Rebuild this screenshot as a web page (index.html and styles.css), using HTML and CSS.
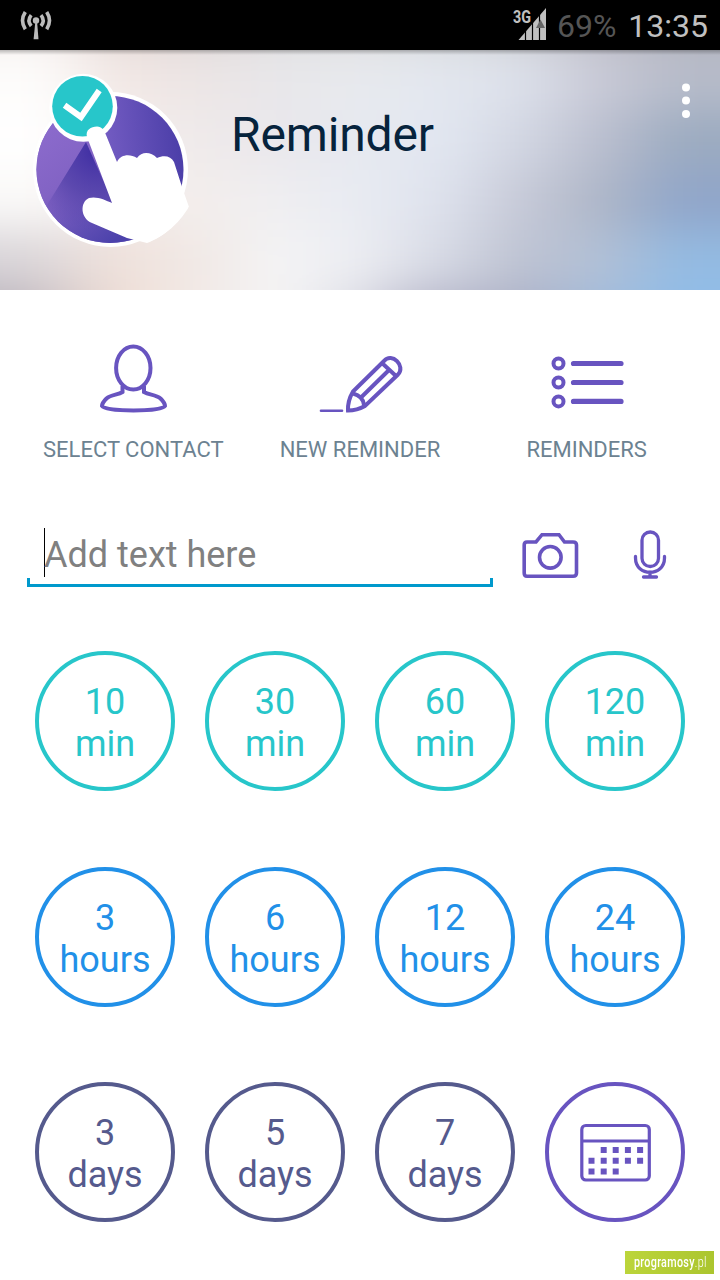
FILE: index.html
```html
<!DOCTYPE html>
<html lang="en">
<head>
<meta charset="utf-8">
<title>Reminder</title>
<link rel="stylesheet" href="styles.css">
</head>
<body>
<div class="status">
  <svg class="antenna" width="32" height="30" viewBox="0 0 32 30">
    <circle cx="16" cy="10.5" r="3.2"/>
    <path d="M15.3 12h1.8l1.4 17.3h-4.9z"/>
    <g class="waves"><path d="M11.2 5.2Q6.8 10.6 11.2 16" /><path d="M5.3 2Q-.3 10.6 5.3 19.2"/><path d="M21 5.2Q25.400 10.600 21 16"/><path d="M26.700 2Q32.300 10.600 26.700 19.200"/></g>
  </svg>
  <div class="status-right">
    <svg class="signal" width="34" height="34" viewBox="0 0 34 34">
      <text x="0" y="16" textLength="18" lengthAdjust="spacingAndGlyphs">3G</text>
      <path d="M5.500 33L33 1V33z"/>
      <path class="splits" d="M12.500 18v15M19.500 10v23M26.500 3v30"/>
      <path class="arrow" d="M27.500 12.500L32 21h-9z"/>
    </svg>
    <span class="battery">69%</span>
    <span class="clock">13:35</span>
  </div>
</div>
<header class="header">
  <svg class="logo" width="162" height="180" viewBox="30 70 162 180">
    <defs>
      <linearGradient id="right" x1="0" y1=".5" x2="1" y2=".4"><stop offset=".4" stop-color="#7960c6"/><stop offset="1" stop-color="#4b3ea8"/></linearGradient>
      <linearGradient id="left" x1="0" y1="0" x2=".6" y2="1"><stop offset="0" stop-color="#9270d2"/><stop offset=".55" stop-color="#8263c4"/><stop offset="1" stop-color="#4c42ab"/></linearGradient>
      <radialGradient id="fold" gradientUnits="userSpaceOnUse" cx="98" cy="150" r="80"><stop offset="0" stop-color="#3d2ca2"/><stop offset=".55" stop-color="#5644ab" stop-opacity=".85"/><stop offset="1" stop-color="#5946ad" stop-opacity="0"/></radialGradient>
      <clipPath id="disc"><path d="M30 70H192V201A90 90 0 0 1 142 246H30Z"/></clipPath>
      <clipPath id="inner"><circle cx="110" cy="169.500" r="73.500"/></clipPath>
    </defs>
    <circle cx="110.500" cy="169.500" r="77.500" fill="#fff"/>
    <circle cx="110" cy="169.500" r="73.500" fill="url(#right)"/>
    <g clip-path="url(#inner)"><path d="M86 120L30 90V250H150Z" fill="url(#left)"/><path d="M86 142L44 210L80 250L140 250L114 205Z" fill="url(#fold)"/></g>
    <circle cx="83.300" cy="107.800" r="34" fill="#fff"/>
    <circle cx="82.500" cy="106.300" r="30.300" fill="#27c6ca"/>
    <path d="M67 107L81 117L97.500 93" fill="none" stroke="#fff" stroke-width="6" stroke-linecap="square"/>
    <g clip-path="url(#disc)"><path d="M87 137C85 130 91 126.500 97 126.500C102 127 104 130 106 135L117 162C121 154 130 154 137 158C142 151 151 152 157 158C164 155 171 156 174 162L183 190L189 207C185 221 162 238 147 243L127 238L92 223C80 218 80 202 89 198C97 196 105 200 112 203Z" fill="#fff"/></g>
  </svg>
  <h1 class="title">Reminder</h1>
  <svg class="more" width="10" height="36" viewBox="0 0 10 36"><circle cx="5" cy="4.500" r="4"/><circle cx="5" cy="17.600" r="4"/><circle cx="5" cy="30.900" r="4"/></svg>
</header>
<nav class="actions">
  <div class="action">
    <svg width="100" height="80" viewBox="83 340 100 80"><ellipse cx="133.300" cy="368" rx="17.200" ry="21.500"/><path d="M122.500 386v6C118 395 111 394.500 106.500 398.500C103.500 401.500 102 404 102 406C106 412 161 412 165 406C165 404 163.500 401.500 160.500 398.500C156 394.500 149 395 144 392v-6"/></svg>
    <span>SELECT CONTACT</span>
  </div>
  <div class="action">
    <svg width="100" height="80" viewBox="310 340 100 80"><path d="M321 410.800H342" stroke-width="2.600" stroke-linecap="round"/><path d="M348 410.500Q347.500 401 353 391.500L384 361C392 352 406 366 398 374.500L365 406Q357 410.500 348 410.500ZM353 393.500Q363 396 364 405M382.500 363.500L396 376M361 397.500L388 371"/></svg>
    <span>NEW REMINDER</span>
  </div>
  <div class="action">
    <svg width="100" height="80" viewBox="537 340 100 80"><circle cx="558.500" cy="363.500" r="5"/><circle cx="558.500" cy="382.500" r="5"/><circle cx="558.500" cy="401.400" r="5"/><path d="M573.500 363.500H621M573.500 382.500H621M573.500 401.400H621" stroke-width="5.200" stroke-linecap="round"/></svg>
    <span>REMINDERS</span>
  </div>
</nav>
<div class="entry">
  <div class="field"><span class="placeholder">Add text here</span></div>
  <svg class="camera" width="58" height="50" viewBox="521 530 58 50"><path d="M527 542H536L542 534.700H559L564.500 542H573Q576.500 542 576.500 545V573Q576.500 576.300 573 576.300H527Q524.200 576.300 524.200 573V545Q524.200 542 527 542Z"/><circle cx="550.300" cy="557.300" r="10.800"/></svg>
  <svg class="mic" width="36" height="52" viewBox="632 529 36 52"><rect x="642" y="532" width="16.500" height="34.500" rx="8.250"/><path d="M635.500 556.500V558C635.500 577 664.500 577 664.500 558V556.500M650 572V577M643.500 577H656.500" stroke-linecap="round"/></svg>
</div>
<main class="times">
  <div class="time min">10<br>min</div><div class="time min">30<br>min</div><div class="time min">60<br>min</div><div class="time min">120<br>min</div>
  <div class="time hours">3<br>hours</div><div class="time hours">6<br>hours</div><div class="time hours">12<br>hours</div><div class="time hours">24<br>hours</div>
  <div class="time days">3<br>days</div><div class="time days">5<br>days</div><div class="time days">7<br>days</div>
  <div class="time custom">
    <svg width="72" height="60" viewBox="0 0 72 60"><rect x="1.800" y="2.500" width="67.500" height="54.500" rx="4"/><path d="M2 18H69"/><path class="dates" d="M20.700 27h6m6 0h6m6.200 0h6m6.200 0h6M8.500 37.700h6m6.200 0h6m6 0h6m6.200 0h6m6.200 0h6M8.500 48.400h6m6.200 0h6m6 0h6"/></svg>
  </div>
</main>
<div class="watermark"><div class="mark"><b>programosy</b><span>.pl</span></div></div>
</body>
</html>
```
FILE: styles.css
```css
* { box-sizing: border-box; }
body {
  margin: 0;
  width: 720px;
  height: 1280px;
  position: relative;
  overflow: hidden;
  background: #fff;
  font-family: Roboto, sans-serif;
}
svg { display: block; flex: none; }
.status {
  height: 50px;
  padding: 0 12px 0 20px;
  display: flex;
  justify-content: space-between;
  background: #000;
  color: #c0c0c0;
  font-size: 32px;
  line-height: 52px;
}
.antenna { margin-top: 10px; fill: #bbb; }
.waves { fill: none; stroke: #bbb; stroke-width: 3.6; }
.status-right { display: flex; }
.signal { margin: 7px 10px 0 1px; fill: #c0c0c0; }
.signal text { font-size: 18px; font-weight: 700; }
.splits { stroke: #000; stroke-width: 1.2; }
.arrow { fill: #666; }
.battery { color: #555; margin-right: 12px; }
.header {
  position: relative;
  z-index: 0;
  overflow: hidden;
  height: 240px;
  padding: 20px 30px;
  display: flex;
  align-items: flex-start;
}
/* Out-of-focus backdrop: six colour bands melted together */
.header::before {
  content: "";
  position: absolute;
  z-index: -1;
  left: -80px;
  top: -60px;
  width: 880px;
  height: 360px;
  filter: blur(22px);
  background:
    linear-gradient(90deg, #f5f0ee 120px, #e5d8d5 200px, #dfd8d8 280px, #dfdfe1 360px, #dfdfe0 440px, #d8dadc 520px, #cfd0d4 600px, #bfbfc7 680px, #b5b5be 760px) 0 0 / 100% 60px no-repeat,
    linear-gradient(90deg, #fdfcfb 120px, #f2e8e5 200px, #ece5e5 280px, #e8e7ea 360px, #e8eaee 440px, #e3e7ef 520px, #dde1eb 600px, #c9cad7 680px, #b7bcca 760px) 0 60px / 100% 60px no-repeat,
    linear-gradient(90deg, #ffffff 120px, #f5efed 200px, #efeaea 280px, #e9e7ec 360px, #e6e9f0 440px, #e2e7f1 520px, #d3d7e3 600px, #bbbfcf 680px, #9cabc0 760px) 0 120px / 100% 60px no-repeat,
    linear-gradient(90deg, #faf9f8 120px, #f4ecea 200px, #f3eeec 280px, #efeef1 360px, #e8ebf2 440px, #dee2ed 520px, #c7cad8 600px, #aeb6c7 680px, #90a5c9 760px) 0 180px / 100% 60px no-repeat,
    linear-gradient(90deg, #d9d5d9 100px, #efe1db 200px, #f1e9e6 280px, #f4f4f5 360px, #ecedf2 440px, #d7dae5 520px, #bec3d2 600px, #b2c0d6 680px, #94bbe2 760px) 0 240px / 100% 60px no-repeat,
    linear-gradient(90deg, #b5aeb8 90px, #efddd4 200px, #f3eae6 280px, #f4f4f4 360px, #dedee6 430px, #b3b3c6 500px, #a9adc4 600px, #a0bbdc 680px, #8fbdea 760px) 0 300px / 100% 60px no-repeat;
}
.header::after {
  content: "";
  position: absolute;
  inset: 0 0 auto;
  height: 5px;
  background: linear-gradient(#00000040, #0000);
}
.title {
  margin: 37px 0 0 39px;
  color: #06233c;
  font-size: 48px;
  line-height: 56px;
  font-weight: 400;
  letter-spacing: -.15px;
}
.more { margin: 13px -.5px 0 auto; fill: #fff; }
.actions {
  display: grid;
  grid-template-columns: repeat(3, 1fr);
  height: 228px;
  padding: 50px 20px 0;
}
.action {
  display: flex;
  flex-direction: column;
  align-items: center;
  color: #6c8291;
  font-size: 22px;
  line-height: 26px;
}
.action svg, .entry svg { fill: none; stroke: #6854c0; stroke-width: 4; }
.action span { margin-top: 17px; }
.entry {
  height: 133px;
  padding: 10px 0 0 27px;
  display: flex;
  align-items: flex-start;
}
.field {
  width: 466px;
  height: 59px;
  padding-left: 17px;
  background:
    linear-gradient(#0099cc, #0099cc) left bottom / 3px 9px no-repeat,
    linear-gradient(#0099cc, #0099cc) right bottom / 3px 9px no-repeat,
    linear-gradient(#0099cc, #0099cc) left bottom / 100% 3px no-repeat;
}
.placeholder {
  display: block;
  height: 49px;
  border-left: 1px solid #000;
  color: #808080;
  font-size: 36px;
  line-height: 54px;
  text-indent: -1px;
}
.entry .camera { margin: 2px 0 0 28px; stroke-width: 3.6; }
.entry .mic { margin: 1px 0 0 53px; stroke-width: 3.3; }
.times {
  display: grid;
  grid-template-columns: repeat(4, 140px);
  gap: 75.5px 30px;
  padding: 0 35px;
}
.time {
  height: 140px;
  padding-top: 26px;
  border: 4px solid;
  border-radius: 50%;
  text-align: center;
  font-size: 36px;
  line-height: 42px;
}
.min { color: #27c6ca; }
.hours { color: #2190e8; }
.days { color: #555a8d; }
.custom { color: #6854c0; padding: 37px 0 0 31px; }
.custom svg { fill: none; stroke: #6854c0; stroke-width: 3.2; }
.custom .dates { stroke-width: 6; }
.watermark {
  position: absolute;
  right: 6px;
  bottom: 6px;
  width: 89px;
  height: 23px;
  padding-left: 9px;
  background: linear-gradient(100deg, #bcd53b, #abc52e);
}
.mark {
  display: flex;
  width: max-content;
  color: #fff;
  font-size: 14px;
  line-height: 22px;
  transform: scaleX(.77);
  transform-origin: 0 0;
  letter-spacing: .4px;
}
.mark b { font-weight: 500; }
.mark span { font-weight: 300; }
```
